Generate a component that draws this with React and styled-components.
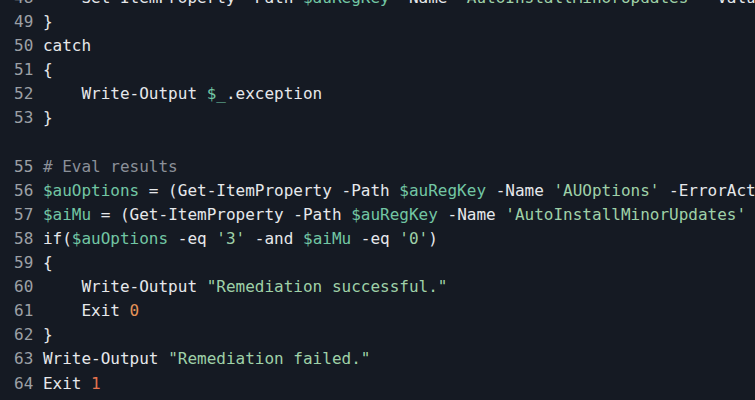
import React from 'react';
import styled, { createGlobalStyle } from 'styled-components';

const GlobalStyle = createGlobalStyle`
  html, body {
    margin: 0;
    padding: 0;
    background: #151a23;
    overflow: hidden;
  }
`;

const Editor = styled.div`
  width: 755px;
  height: 400px;
  background: #151a23;
  overflow: hidden;
  font-family: "DejaVu Sans Mono", monospace;
  font-size: 16px;
  color: #e6e8eb;
`;

const Lines = styled.div`
  display: flex;
  flex-direction: column;
  margin-top: -14px;
  padding-left: 14px;
`;

const Row = styled.div`
  display: flex;
  height: 24.1px;
  line-height: 24px;
  white-space: pre;
`;

const LineNo = styled.span`
  width: 2ch;
  margin-right: 1ch;
  text-align: right;
  color: #9ca0a6;
  flex-shrink: 0;
`;

const Code = styled.span`
  white-space: pre;
`;

const colors = {
  v: '#72c6a3',
  s: '#9fd1a8',
  c: '#8b9099',
  n0: '#e59459',
  n1: '#e6734f',
};

const Tok = styled.span`
  color: ${p => colors[p.$k] || 'inherit'};
`;

// each line is a list of [kind, text]; kind '' means plain text
const lines = [
  [48, [['', '    Set-ItemProperty -Path '], ['v', '$auRegKey'], ['', ' -Name '], ['s', "'AutoInstallMinorUpdates'"], ['', ' -Value '], ['s', "'0'"]]],
  [49, [['', '}']]],
  [50, [['', 'catch']]],
  [51, [['', '{']]],
  [52, [['', '    Write-Output '], ['v', '$_'], ['', '.exception']]],
  [53, [['', '}']]],
  [54, []],
  [55, [['c', '# Eval results']]],
  [56, [['v', '$auOptions'], ['', ' = (Get-ItemProperty -Path '], ['v', '$auRegKey'], ['', ' -Name '], ['s', "'AUOptions'"], ['', ' -ErrorAction SilentlyContinue)']]],
  [57, [['v', '$aiMu'], ['', ' = (Get-ItemProperty -Path '], ['v', '$auRegKey'], ['', ' -Name '], ['s', "'AutoInstallMinorUpdates'"], ['', ' -ErrorAction']]],
  [58, [['', 'if('], ['v', '$auOptions'], ['', ' -eq '], ['s', "'3'"], ['', ' -and '], ['v', '$aiMu'], ['', ' -eq '], ['s', "'0'"], ['', ')']]],
  [59, [['', '{']]],
  [60, [['', '    Write-Output '], ['s', '"Remediation successful."']]],
  [61, [['', '    Exit '], ['n0', '0']]],
  [62, [['', '}']]],
  [63, [['', 'Write-Output '], ['s', '"Remediation failed."']]],
  [64, [['', 'Exit '], ['n1', '1']]],
];

const App = () => (
  <Editor>
    <GlobalStyle />
    <Lines>
      {lines.map(([no, toks]) => (
        <Row key={no}>
          <LineNo>{no === 54 ? '' : no}</LineNo>
          <Code>
            {toks.map(([k, t], i) => (
              <Tok key={i} $k={k}>{t}</Tok>
            ))}
          </Code>
        </Row>
      ))}
    </Lines>
  </Editor>
);

export default App;
